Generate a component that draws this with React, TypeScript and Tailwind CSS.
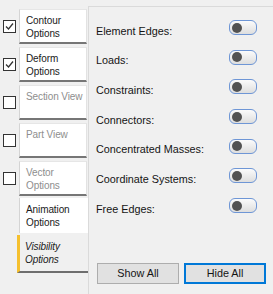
import React from "react";

const font = { fontFamily: '"Liberation Sans", Arial, sans-serif' };

function Check({ checked }: { checked: boolean }) {
  return (
    <div className="w-[13px] h-[13px] border border-[#333333] bg-white flex items-center justify-center">
      {checked && (
        <svg width="9" height="9" viewBox="0 0 9 9">
          <polyline points="1,4.5 3.5,7 8,1.5" fill="none" stroke="#333333" strokeWidth="1.3" />
        </svg>
      )}
    </div>
  );
}

function Tab({
  lines,
  disabled,
  checkbox,
  checked,
  mt,
}: {
  lines: string[];
  disabled?: boolean;
  checkbox: boolean;
  checked?: boolean;
  mt: string;
}) {
  return (
    <div className={`flex items-center ${mt}`}>
      <div className="w-[19px] pl-[3px]">{checkbox && <Check checked={!!checked} />}</div>
      <div
        className={`w-[68px] h-[35px] bg-white border-l border-t border-r border-l-[#d4d4d4] border-t-[#e6e6e6] border-r-[#e2e2e2] border-b-2 border-b-[#767676] pl-[6px] pt-[4px] leading-[13px] text-[10px] tracking-[-0.1px] ${
          disabled ? "text-[#8e8e8e]" : "text-[#1a1a1a]"
        }`}
      >
        {lines.map((l) => (
          <div key={l} className="whitespace-nowrap">
            {l}
          </div>
        ))}
      </div>
    </div>
  );
}

function Toggle() {
  return (
    <div className="w-[28px] h-[15px] rounded-[6px] border border-[#6e96d6] bg-gradient-to-b from-[#fbfbfb] to-[#dedede] flex items-center pl-[2px]">
      <div className="w-[10px] h-[10px] rounded-full bg-[#525252]" />
    </div>
  );
}

const rows = [
  "Element Edges:",
  "Loads:",
  "Constraints:",
  "Connectors:",
  "Concentrated Masses:",
  "Coordinate Systems:",
  "Free Edges:",
];

export default function App() {
  return (
    <div className="w-[273px] h-[294px] bg-[#f0f0f0] flex overflow-hidden" style={font}>
      <div className="w-[88px] flex flex-col pt-[9px]">
        <Tab lines={["Contour", "Options"]} checkbox checked mt="" />
        <Tab lines={["Deform", "Options"]} checkbox checked mt="mt-[3px]" />
        <Tab lines={["Section View"]} checkbox disabled mt="mt-[3px]" />
        <Tab lines={["Part View"]} checkbox disabled mt="mt-[3px]" />
        <Tab lines={["Vector", "Options"]} checkbox disabled mt="mt-[3px]" />
        <div className="flex mt-[2px]">
          <div className="w-[19px]" />
          <div className="w-[69px] h-[35px] bg-white border-l border-l-[#d4d4d4] pl-[6px] pt-[5px] leading-[13px] text-[10px] tracking-[-0.1px] text-[#1a1a1a]">
            <div>Animation</div>
            <div>Options</div>
          </div>
        </div>
        <div className="flex mt-[2px]">
          <div className="w-[17px]" />
          <div className="w-[71px] h-[38px] bg-[#f0f0f0] border-l-[3px] border-l-[#f5c02e] border-b-2 border-b-[#6e6e6e] pl-[5px] pt-[5px] leading-[13px] text-[10px] tracking-[-0.1px] text-[#1a1a1a] italic">
            <div>Visibility</div>
            <div>Options</div>
          </div>
        </div>
      </div>
      <div className="flex-1 mt-[6px] border-l border-t border-[#dadada] flex flex-col">
        <div className="pt-[13px] flex flex-col">
          {rows.map((r) => (
            <div key={r} className="h-[29.7px] flex items-start pl-[7px] pr-[16px]">
              <div className="flex-1 mt-[4.5px] text-[10.8px] leading-[13px] text-[#141414] whitespace-nowrap">
                {r}
              </div>
              <Toggle />
            </div>
          ))}
        </div>
        <div className="flex-1" />
        <div className="flex pl-[8px] gap-[5px] mb-[10px]">
          <button className="w-[82px] h-[21px] border border-[#adadad] bg-[#e1e1e1] text-[10.8px] text-[#141414]">
            Show All
          </button>
          <button className="w-[82px] h-[21px] border-2 border-[#0078d7] bg-[#e1e1e1] text-[10.8px] text-[#141414]">
            Hide All
          </button>
        </div>
      </div>
    </div>
  );
}
